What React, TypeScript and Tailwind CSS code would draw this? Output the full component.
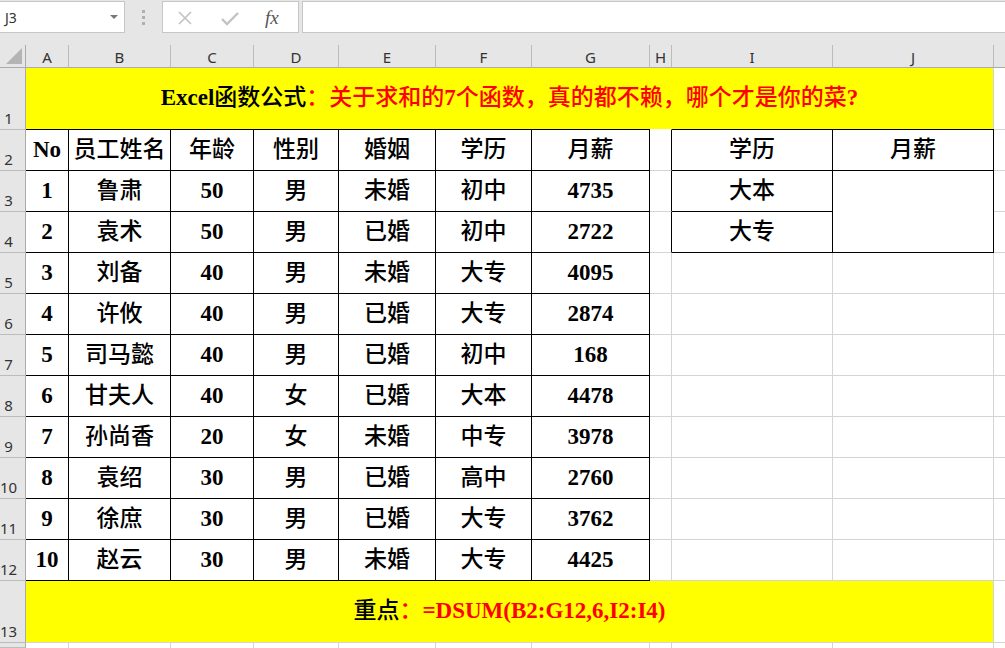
import React from 'react';

const serif = "font-['Liberation_Serif','Noto_Sans_CJK_SC',serif] font-bold text-[23px] text-black";
const ui = "font-['Noto_Sans','Liberation_Sans',sans-serif]";

const cols = ['A', 'B', 'C', 'D', 'E', 'F', 'G', 'H', 'I', 'J'];

const headers = ['No', '员工姓名', '年龄', '性别', '婚姻', '学历', '月薪'];

const rows: (string | number)[][] = [
  [1, '鲁肃', 50, '男', '未婚', '初中', 4735],
  [2, '袁术', 50, '男', '已婚', '初中', 2722],
  [3, '刘备', 40, '男', '未婚', '大专', 4095],
  [4, '许攸', 40, '男', '已婚', '大专', 2874],
  [5, '司马懿', 40, '男', '已婚', '初中', 168],
  [6, '甘夫人', 40, '女', '已婚', '大本', 4478],
  [7, '孙尚香', 20, '女', '未婚', '中专', 3978],
  [8, '袁绍', 30, '男', '已婚', '高中', 2760],
  [9, '徐庶', 30, '男', '已婚', '大专', 3762],
  [10, '赵云', 30, '男', '未婚', '大专', 4425],
];

// CJK text reads lighter in the reference than a bold sans, so drop it to medium
const cjk = (v: string | number) =>
  typeof v === 'string' && /[\u4e00-\u9fff]/.test(v) ? 'font-medium' : '';

function RowHead({ n, top }: { n?: number; top?: boolean }) {
  return (
    <div
      className={`${ui} bg-[#e6e6e6] border-r border-[#ababab] flex items-end text-[15px] leading-none text-[#333] ${
        top ? 'border-t border-t-[#bcbcbc]' : ''
      } ${n === 1 ? '' : 'border-b border-b-[#bcbcbc]'}`}
    >
      {n !== undefined && <span className="w-[17px] text-center pb-[3px]">{n}</span>}
    </div>
  );
}

function FormulaBar() {
  return (
    <div className={`${ui} flex h-[45px] bg-[#e6e6e6] pt-px`}>
      <div className="w-[125px] h-[32px] bg-white border border-l-0 border-[#c6c6c6] flex items-center justify-between pl-[5px] pr-[6px]">
        <span className="text-[14px] text-[#333]">J3</span>
        <svg width="8" height="4" viewBox="0 0 8 4">
          <path d="M0 0h8L4 4z" fill="#777" />
        </svg>
      </div>
      <div className="w-[37px] flex flex-col items-center gap-[3px] pt-[9px]">
        <span className="w-[3px] h-[3px] bg-[#b0b0b0]" />
        <span className="w-[3px] h-[3px] bg-[#b0b0b0]" />
        <span className="w-[3px] h-[3px] bg-[#b0b0b0]" />
      </div>
      <div className="w-[137px] h-[32px] bg-white border border-[#c6c6c6] flex items-center pl-[14px]">
        <svg width="16" height="16" viewBox="0 0 16 16" className="mt-px">
          <path d="M2 2l12 12M14 2L2 14" stroke="#c2c2c2" strokeWidth="1.6" />
        </svg>
        <svg width="18" height="14" viewBox="0 0 18 14" className="ml-[28px] mt-[3px]">
          <path d="M1 7l5 5L17 1" stroke="#c2c2c2" strokeWidth="2.4" fill="none" />
        </svg>
        <span className="ml-[26px] font-['Liberation_Serif',serif] italic text-[19px] text-[#555] leading-none">
          fx
        </span>
      </div>
      <div className="ml-[3px] flex-1 h-[32px] bg-white border border-r-0 border-[#c6c6c6]" />
    </div>
  );
}

export default function App() {
  const black = 'border-r border-b border-black';
  const gray = 'border-r border-b border-[#d4d4d4]';

  return (
    <div className="w-[1005px] h-[648px] overflow-hidden bg-white">
      <FormulaBar />
      <div className="grid grid-cols-[26px_43px_102px_83px_85px_97px_96px_118px_22px_161px_161px_1fr] grid-rows-[23px_61px_42px_repeat(10,41px)_62px_1fr] h-[603px]">
        {/* column header row */}
        <div className="bg-[#e6e6e6] border-r border-b border-[#ababab] flex items-end justify-end pr-[3px] pb-[3px]">
          <svg width="16" height="16" viewBox="0 0 16 16">
            <path d="M16 0V16H0z" fill="#b4b4b4" />
          </svg>
        </div>
        {cols.map((c) => (
          <div
            key={c}
            className={`${ui} bg-[#e6e6e6] border-r border-r-[#bcbcbc] border-b border-b-[#ababab] flex items-center justify-center pt-[3px] text-[15px] text-[#333]`}
          >
            {c}
          </div>
        ))}
        <div className="bg-[#e6e6e6] border-b border-[#ababab]" />

        {/* row 1 */}
        <RowHead n={1} />
        <div className={`${serif} col-span-10 bg-[#ffff00] border-r border-[#d4d4d4] flex items-center justify-center`}>
          <span>Excel</span>
          <span className="font-medium">函数公式</span>
          <span className="text-[#ff0000] font-medium">：关于求和的</span>
          <span className="text-[#ff0000]">7</span>
          <span className="text-[#ff0000] font-medium">个函数，真的都不赖，哪个才是你的菜</span>
          <span className="text-[#ff0000]">?</span>
        </div>
        <div />

        {/* row 2 */}
        <RowHead n={2} top />
        {headers.map((h) => (
          <div key={h} className={`${serif} ${cjk(h)} ${black} border-t flex items-center justify-center`}>
            {h}
          </div>
        ))}
        <div className="border-t border-t-white border-r border-r-black border-b border-b-[#d4d4d4]" />
        <div className={`${serif} font-medium ${black} border-t flex items-center justify-center`}>学历</div>
        <div className={`${serif} font-medium ${black} border-t flex items-center justify-center`}>月薪</div>
        <div className="border-t border-b border-[#d4d4d4]" />

        {/* rows 3-12 */}
        {rows.map((r, i) => {
          const n = i + 3;
          return (
            <React.Fragment key={n}>
              <RowHead n={n} />
              {r.map((v, j) => (
                <div key={j} className={`${serif} ${cjk(v)} ${black} flex items-center justify-center`}>
                  {v}
                </div>
              ))}
              <div
                className={`border-r border-b border-b-[#d4d4d4] ${
                  n <= 4 ? 'border-r-black' : 'border-r-[#d4d4d4]'
                }`}
              />
              {n === 3 && (
                <>
                  <div className={`${serif} font-medium ${black} flex items-center justify-center`}>大本</div>
                  <div className={`${black} row-span-2`} />
                </>
              )}
              {n === 4 && (
                <div className={`${serif} font-medium ${black} flex items-center justify-center`}>大专</div>
              )}
              {n > 4 && (
                <>
                  <div className={gray} />
                  <div className={gray} />
                </>
              )}
              <div className="border-b border-[#d4d4d4]" />
            </React.Fragment>
          );
        })}

        {/* row 13 */}
        <RowHead n={13} />
        <div className={`${serif} col-span-10 bg-[#ffff00] ${gray} flex items-center justify-center`}>
          <span className="font-medium">重点</span>
          <span className="text-[#ff0000] font-medium">：</span>
          <span className="text-[#ff0000]">=DSUM(B2:G12,6,I2:I4)</span>
        </div>
        <div className="border-b border-[#d4d4d4]" />

        {/* row 14 */}
        <RowHead />
        {cols.map((c) => (
          <div key={c} className="border-r border-[#d4d4d4]" />
        ))}
        <div />
      </div>
    </div>
  );
}
